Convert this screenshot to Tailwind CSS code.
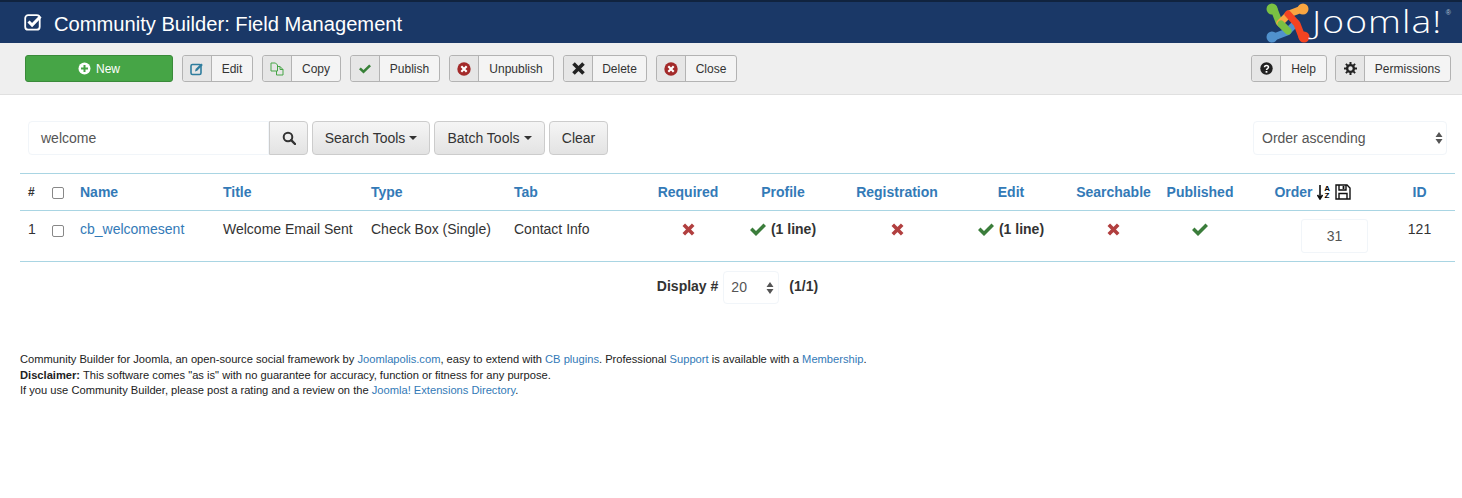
<!DOCTYPE html>
<html lang="en">
<head>
    <meta charset="UTF-8">
    <meta name="viewport" content="width=device-width, initial-scale=1.0">
    <title>Community Builder: Field Management</title>
    <script src="https://cdn.jsdelivr.net/npm/@tailwindcss/browser@4"></script>
</head>
<body class="bg-white font-['Liberation_Sans',Arial,sans-serif] text-[14px] text-[#333] overflow-hidden">
    <!-- header -->
    <header class="h-[43px] bg-[#1a3867] border-t-2 border-[#10233f] flex items-center justify-between pl-[24px] pr-[11px]">
        <div class="flex items-center gap-[11px] text-white text-[20.150px] leading-none">
            <svg class="w-[19px] h-[19px]" viewBox="0 0 19 19" fill="none">
                <rect x="1.200" y="2.200" width="14.500" height="14.500" rx="3" stroke="#fff" stroke-width="1.800"/>
                <path d="M4.500 8.500l3.600 3.600 8.400-8.600" stroke="#fff" stroke-width="3"/>
            </svg>
            <h1 class="mt-[4px]">Community Builder: Field Management</h1>
        </div>
        <div class="flex items-start">
            <svg class="w-[46px] h-[41px]" viewBox="0 0 46 41" fill="none" stroke-width="7" stroke-linecap="round" stroke-linejoin="round">
                <path d="M9 7L14 20l9 9" stroke="#7ac143"/>
                <path d="M37 7L24 12l-9 9" stroke="#f9a541"/>
                <path d="M9 35L22 30l9-9" stroke="#5091cd"/>
                <path d="M37 35L32 22l-9-10" stroke="#f44321"/>
                <path d="M16 22l7 7" stroke="#7ac143"/>
                <circle cx="7" cy="7" r="5.500" fill="#7ac143" stroke="none"/>
                <circle cx="38" cy="7" r="5.500" fill="#f9a541" stroke="none"/>
                <circle cx="7" cy="35" r="5.500" fill="#5091cd" stroke="none"/>
                <circle cx="39" cy="35" r="5.500" fill="#f44321" stroke="none"/>
            </svg>
            <span class="ml-[1px] w-[134px] block mt-[1px] font-['Open_Sans',sans-serif] font-light text-white text-[31px] leading-[36px] tracking-[0.900px] origin-left scale-x-[1.2]">Joomla!</span>
            <span class="mt-[7px] text-[7px] leading-none text-[#b9c4d4]">®</span>
        </div>
    </header>

    <!-- toolbar -->
    <div class="h-[52px] bg-[#efefef] border-b border-[#e0e0e0] flex items-center justify-between pl-[25px] pr-[11px] text-[12px]">
        <div class="flex items-center gap-[9px]">
            <button class="w-[148px] h-[27px] rounded-[3px] bg-[#46a546] border border-[#3a8a3a] text-white flex items-center justify-center gap-[5px]">
                <svg class="w-[13px] h-[13px]" viewBox="0 0 13 13"><circle cx="6.500" cy="6.500" r="6" fill="#fff"/><path d="M6.500 3v7M3 6.500h7" stroke="#46a546" stroke-width="2"/></svg>
                New
            </button>
            <div class="flex h-[27px] rounded-[3px] border border-[#b3b3b3] bg-[#f4f4f4]">
                <span class="w-[29px] flex items-center justify-center bg-[#e6e6e6] border-r border-[#b3b3b3] rounded-l-[3px]">
                    <svg class="w-[14px] h-[14px]" viewBox="0 0 14 14" fill="none"><rect x="1" y="2.500" width="10" height="10" rx="1.500" stroke="#2f7d9e" stroke-width="1.600"/><path d="M5 9.500l.6-2.400L11.200 1.500l1.600 1.600-5.600 5.700z" fill="#2f7d9e"/></svg>
                </span>
                <span class="w-[40px] flex items-center justify-center">Edit</span>
            </div>
            <div class="flex h-[27px] rounded-[3px] border border-[#b3b3b3] bg-[#f4f4f4]">
                <span class="w-[29px] flex items-center justify-center bg-[#e6e6e6] border-r border-[#b3b3b3] rounded-l-[3px]">
                    <svg class="w-[14px] h-[14px]" viewBox="0 0 14 14" fill="none" stroke="#46a546" stroke-width="1"><path d="M1 1h4.500l2 2v6H1z"/><path d="M7 4.500h3l3 3v5.500H6.500V9"/><path d="M10 4.500V7.500h3"/></svg>
                </span>
                <span class="w-[48px] flex items-center justify-center">Copy</span>
            </div>
            <div class="flex h-[27px] rounded-[3px] border border-[#b3b3b3] bg-[#f4f4f4]">
                <span class="w-[29px] flex items-center justify-center bg-[#e6e6e6] border-r border-[#b3b3b3] rounded-l-[3px]">
                    <svg class="w-[12px] h-[10px]" viewBox="0 0 12 10"><path d="M0 5.200L1.800 3.500 4.500 6.100 10.200 0.500 12 2.200 4.500 9.500z" fill="#378137"/></svg>
                </span>
                <span class="w-[59px] flex items-center justify-center">Publish</span>
            </div>
            <div class="flex h-[27px] rounded-[3px] border border-[#b3b3b3] bg-[#f4f4f4]">
                <span class="w-[29px] flex items-center justify-center bg-[#e6e6e6] border-r border-[#b3b3b3] rounded-l-[3px]">
                    <svg class="w-[14px] h-[14px]" viewBox="0 0 13 13"><circle cx="6.500" cy="6.500" r="6.200" fill="#a32a2a"/><path d="M4 4l5 5M9 4l-5 5" stroke="#fff" stroke-width="2"/></svg>
                </span>
                <span class="w-[74px] flex items-center justify-center">Unpublish</span>
            </div>
            <div class="flex h-[27px] rounded-[3px] border border-[#b3b3b3] bg-[#f4f4f4]">
                <span class="w-[29px] flex items-center justify-center bg-[#e6e6e6] border-r border-[#b3b3b3] rounded-l-[3px]">
                    <svg class="w-[13px] h-[13px]" viewBox="0 0 13 13"><path d="M1.500 1.500l10 10M11.500 1.500l-10 10" stroke="#222" stroke-width="3.600"/></svg>
                </span>
                <span class="w-[53px] flex items-center justify-center">Delete</span>
            </div>
            <div class="flex h-[27px] rounded-[3px] border border-[#b3b3b3] bg-[#f4f4f4]">
                <span class="w-[29px] flex items-center justify-center bg-[#e6e6e6] border-r border-[#b3b3b3] rounded-l-[3px]">
                    <svg class="w-[14px] h-[14px]" viewBox="0 0 13 13"><circle cx="6.500" cy="6.500" r="6.200" fill="#a32a2a"/><path d="M4 4l5 5M9 4l-5 5" stroke="#fff" stroke-width="2"/></svg>
                </span>
                <span class="w-[50px] flex items-center justify-center">Close</span>
            </div>
        </div>
        <div class="flex items-center gap-[8px]">
            <div class="flex h-[27px] rounded-[3px] border border-[#b3b3b3] bg-[#f4f4f4]">
                <span class="w-[29px] flex items-center justify-center bg-[#e6e6e6] border-r border-[#b3b3b3] rounded-l-[3px]">
                    <svg class="w-[13px] h-[13px]" viewBox="0 0 13 13"><circle cx="6.500" cy="6.500" r="6.200" fill="#222"/><path d="M4.500 5.200c0-2.400 4-2.400 4 0 0 1.400-2 1.400-2 2.700" fill="none" stroke="#fff" stroke-width="1.500"/><rect x="5.600" y="9" width="1.800" height="1.700" fill="#fff"/></svg>
                </span>
                <span class="w-[45px] flex items-center justify-center">Help</span>
            </div>
            <div class="flex h-[27px] rounded-[3px] border border-[#b3b3b3] bg-[#f4f4f4]">
                <span class="w-[29px] flex items-center justify-center bg-[#e6e6e6] border-r border-[#b3b3b3] rounded-l-[3px]">
                    <svg class="w-[13px] h-[13px]" viewBox="0 0 13 13"><circle cx="6.500" cy="6.500" r="3.400" fill="none" stroke="#222" stroke-width="2.400"/><path d="M6.500 0v13M0 6.500h13M1.900 1.900l9.200 9.200M11.100 1.900l-9.200 9.200" stroke="#222" stroke-width="2" stroke-dasharray="2.400 8.200 2.400 8.200"/></svg>
                </span>
                <span class="w-[85px] flex items-center justify-center">Permissions</span>
            </div>
        </div>
    </div>

    <!-- filters -->
    <div class="flex items-start justify-between pl-[28px] pr-[15px] pt-[26px]">
        <div class="flex items-center h-[34px] gap-[4px]">
            <div class="flex h-[34px]">
                <div class="w-[241px] border border-[#f1f5f9] rounded-l-[4px] pl-[12px] flex items-center text-[#555]">welcome</div>
                <button class="w-[39px] bg-linear-to-b from-[#f5f5f5] to-[#e3e3e3] border border-[#ccc] rounded-r-[4px] flex items-center justify-center">
                    <svg class="w-[14px] h-[14px]" viewBox="0 0 14 14" fill="none" stroke="#333"><circle cx="6" cy="6" r="4.300" stroke-width="2"/><path d="M9.200 9.200l3.800 3.800" stroke-width="2.400" stroke-linecap="round"/></svg>
                </button>
            </div>
            <button class="w-[118px] h-[34px] bg-linear-to-b from-[#f5f5f5] to-[#e3e3e3] border border-[#ccc] rounded-[4px] flex items-center justify-center gap-[4px]">Search Tools <span class="border-x-[4px] border-x-transparent border-t-[4px] border-t-[#333]"></span></button>
            <button class="w-[111px] h-[34px] bg-linear-to-b from-[#f5f5f5] to-[#e3e3e3] border border-[#ccc] rounded-[4px] flex items-center justify-center gap-[4px]">Batch Tools <span class="border-x-[4px] border-x-transparent border-t-[4px] border-t-[#333]"></span></button>
            <button class="w-[59px] h-[34px] bg-linear-to-b from-[#f5f5f5] to-[#e3e3e3] border border-[#ccc] rounded-[4px] flex items-center justify-center">Clear</button>
        </div>
        <div class="w-[194px] h-[34px] border border-[#f1f5f9] rounded-[4px] flex items-center justify-between pl-[8px] pr-[3px] text-[#555]">
            Order ascending
            <svg class="w-[8px] h-[12px]" viewBox="0 0 8 12" fill="#555"><path d="M4 0l3.500 5H.5zM4 12L.5 7h7z"/></svg>
        </div>
    </div>

    <!-- fields table -->
    <div class="px-[20px] pt-[18px]">
        <table class="w-[1435px] table-fixed border-separate border-spacing-0 [&_th]:border-y [&_th]:border-[#a9d5e3] [&_td]:border-b [&_td]:border-[#a9d5e3]">
            <colgroup>
                <col class="w-[24px]"><col class="w-[28px]"><col class="w-[143px]"><col class="w-[148px]"><col class="w-[143px]"><col class="w-[144px]"><col class="w-[76px]"><col class="w-[114px]"><col class="w-[114px]"><col class="w-[114px]"><col class="w-[91px]"><col class="w-[82px]"><col class="w-[143px]"><col class="w-[71px]">
            </colgroup>
            <thead>
                <tr class="h-[38px] text-[#337ab7] font-bold text-center">
                    <th class="pl-[8px] text-left text-[#333] text-[12px]">#</th>
                    <th class="pl-[8px] text-left"><span class="block w-[12px] h-[12px] mt-[2px] border border-[#888] rounded-[2px] bg-white"></span></th>
                    <th class="pl-[8px] text-left">Name</th>
                    <th class="pl-[8px] text-left">Title</th>
                    <th class="pl-[8px] text-left">Type</th>
                    <th class="pl-[8px] text-left">Tab</th>
                    <th>Required</th>
                    <th>Profile</th>
                    <th>Registration</th>
                    <th>Edit</th>
                    <th>Searchable</th>
                    <th>Published</th>
                    <th>
                        <span class="inline-flex items-center gap-[4px]">Order
                            <span class="inline-flex items-center text-black">
                                <svg class="w-[6px] h-[15px]" viewBox="0 0 6 15"><path d="M3 0v13M.5 10L3 14l2.500-4" fill="none" stroke="#111" stroke-width="1.600"/></svg>
                                <span class="flex flex-col text-[8px] leading-[7px] w-[7px] ml-[1px] font-bold"><span>A</span><span>Z</span></span>
                            </span>
                            <svg class="w-[16px] h-[16px]" viewBox="0 0 16 16" fill="none" stroke="#111" stroke-width="1.400"><path d="M1 1h11l3 3v11H1z"/><path d="M4 1v5h7V1"/><path d="M8.500 2v3" stroke-width="1.800"/><path d="M4 15V9.500h8V15"/></svg>
                        </span>
                    </th>
                    <th>ID</th>
                </tr>
            </thead>
            <tbody>
                <tr class="h-[51px] align-top">
                    <td class="pl-[8px] pt-[8px] text-left">1</td>
                    <td class="pl-[8px] pt-[7px]"><span class="block w-[12px] h-[12px] mt-[7px] border border-[#888] rounded-[2px] bg-white"></span></td>
                    <td class="pl-[8px] pt-[8px] text-[#337ab7]">cb_welcomesent</td>
                    <td class="pl-[8px] pt-[8px]">Welcome Email Sent</td>
                    <td class="pl-[8px] pt-[8px]">Check Box (Single)</td>
                    <td class="pl-[8px] pt-[8px]">Contact Info</td>
                    <td class="pt-[12px]"><svg class="w-[13px] h-[13px] mx-auto" viewBox="0 0 13 13"><path d="M1.800 1.800l9.400 9.400M11.200 1.800l-9.400 9.400" stroke="#b13f3f" stroke-width="3.600"/></svg></td>
                    <td class="pt-[8px] text-center font-bold"><span class="inline-flex items-center gap-[5px]"><svg class="w-[16px] h-[13px]" viewBox="0 0 16 13"><path d="M0 7l2.500-2.500 3.500 3.500L13.500.5 16 3 6 13z" fill="#3b7d3b"/></svg>(1 line)</span></td>
                    <td class="pt-[12px]"><svg class="w-[13px] h-[13px] mx-auto" viewBox="0 0 13 13"><path d="M1.800 1.800l9.400 9.400M11.200 1.800l-9.400 9.400" stroke="#b13f3f" stroke-width="3.600"/></svg></td>
                    <td class="pt-[8px] text-center font-bold"><span class="inline-flex items-center gap-[5px]"><svg class="w-[16px] h-[13px]" viewBox="0 0 16 13"><path d="M0 7l2.500-2.500 3.500 3.500L13.500.5 16 3 6 13z" fill="#3b7d3b"/></svg>(1 line)</span></td>
                    <td class="pt-[12px]"><svg class="w-[13px] h-[13px] mx-auto" viewBox="0 0 13 13"><path d="M1.800 1.800l9.400 9.400M11.200 1.800l-9.400 9.400" stroke="#b13f3f" stroke-width="3.600"/></svg></td>
                    <td class="pt-[12px]"><svg class="w-[16px] h-[13px] mx-auto" viewBox="0 0 16 13"><path d="M0 7l2.500-2.500 3.500 3.500L13.500.5 16 3 6 13z" fill="#3b7d3b"/></svg></td>
                    <td class="pt-[8px] pl-[60px]"><div class="w-[67px] h-[34px] border border-[#f1f5f9] rounded-[3px] flex items-center justify-center text-[#555] text-[14px]">31</div></td>
                    <td class="pt-[8px] text-center">121</td>
                </tr>
            </tbody>
        </table>

        <!-- pagination -->
        <div class="flex items-center justify-center gap-[5px] pt-[9px] pl-[13px]">
            <span class="font-bold mb-[2px]">Display #</span>
            <div class="w-[56px] h-[33px] border border-[#f1f5f9] rounded-[4px] flex items-center justify-between pl-[7px] pr-[4px] text-[#555]">20
                <svg class="w-[8px] h-[12px]" viewBox="0 0 8 12" fill="#555"><path d="M4 0l3.500 5H.5zM4 12L.5 7h7z"/></svg>
            </div>
            <span class="ml-[5px] font-bold mb-[2px]">(1/1)</span>
        </div>

        <!-- footer -->
        <p class="pt-[48px] text-[11.150px] leading-[15.700px] text-[#222]">
            Community Builder for Joomla, an open-source social framework by <a class="text-[#337ab7]" href="#">Joomlapolis.com</a>, easy to extend with <a class="text-[#337ab7]" href="#">CB plugins</a>. Professional <a class="text-[#337ab7]" href="#">Support</a> is available with a <a class="text-[#337ab7]" href="#">Membership</a>.<br>
            <strong>Disclaimer:</strong> This software comes "as is" with no guarantee for accuracy, function or fitness for any purpose.<br>
            If you use Community Builder, please post a rating and a review on the <a class="text-[#337ab7]" href="#">Joomla! Extensions Directory</a>.
        </p>
    </div>
</body>
</html>
